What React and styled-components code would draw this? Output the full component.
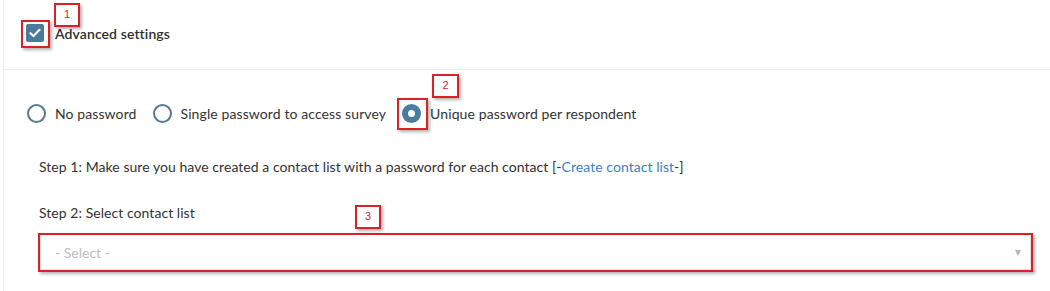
import React from "react";
import styled, { createGlobalStyle } from "styled-components";

const Global = createGlobalStyle`
  html, body { margin: 0; padding: 0; background: #fff; }
  body { font-family: Lato, "Liberation Sans", sans-serif; color: #333; }
  * { box-sizing: border-box; }
`;

const Page = styled.div`
  position: relative;
  width: 1050px;
  height: 291px;
  padding-left: 3px;
  overflow: hidden;
`;

const Panel = styled.div`
  border-left: 1px solid #f1f1f1;
  height: 100%;
`;

const Header = styled.div`
  height: 70px;
  border-bottom: 1px solid #ededed;
  display: flex;
  align-items: center;
  padding-left: 22px;
  gap: 11px;
  padding-bottom: 3px;
`;

const CheckBox = styled.span`
  width: 18px;
  height: 18px;
  border-radius: 2px;
  background: #4a7b9d;
  display: inline-flex;
  align-items: center;
  justify-content: center;
`;

const HeaderLabel = styled.span`
  font-size: 14px;
  font-weight: 600;
  color: #2e2e2e;
  letter-spacing: 0.1px;
`;

const Body = styled.div`
  padding: 34px 19px 0 23px;
`;

const RadioRow = styled.div`
  display: flex;
  align-items: center;
  height: 18px;
`;

const RadioItem = styled.label`
  display: inline-flex;
  align-items: center;
  gap: 9px;
  margin-right: 16px;
  font-size: 14px;
  color: #333;
  letter-spacing: 0.1px;
`;

const RadioCircle = styled.span`
  width: 19px;
  height: 19px;
  border-radius: 50%;
  border: ${(p) => (p.$checked ? "6px solid #4a7ca0" : "2px solid #577a8e")};
  background: #fff;
  flex: none;
`;

const Steps = styled.div`
  padding-left: 12px;
  margin-top: 36px;
`;

const StepText = styled.div`
  font-size: 14px;
  line-height: 18px;
  color: #333;
  letter-spacing: 0.05px;
  margin-bottom: ${(p) => p.$mb || "0"};
`;

const Link = styled.a`
  color: #3b7fd2;
  text-decoration: none;
`;

const Select = styled.div`
  height: 36px;
  width: 991px;
  margin-left: 1px;
  border: 1px solid #e2e2e2;
  display: flex;
  align-items: center;
  justify-content: space-between;
  padding: 0 9px 0 14px;
  font-size: 14px;
  color: #bdbdbd;
`;

const Arrow = styled.span`
  width: 0;
  height: 0;
  border-left: 3.5px solid transparent;
  border-right: 3.5px solid transparent;
  border-top: 6px solid #b5b5b5;
  margin-top: 2px;
`;

const Mark = styled.div`
  position: absolute;
  border: 2px solid #d8222a;
  box-shadow: 2px 2px 3px rgba(0, 0, 0, 0.3);
  pointer-events: none;
`;

const Num = styled(Mark)`
  display: flex;
  justify-content: center;
  align-items: flex-start;
  padding-top: 3px;
  font-family: "Liberation Sans", Arial, sans-serif;
  font-size: 11px;
  color: #d8222a;
  background: transparent;
`;

const marks = [
  { n: "1", label: [54, 3, 26, 24], box: [21, 20, 29, 28] },
  { n: "2", label: [432, 74, 27, 24], box: [397, 98, 31, 32] },
  { n: "3", label: [355, 205, 26, 24], box: [38, 233, 995, 39] },
];

export default function App() {
  return (
    <>
      <Global />
      <Page>
        <Panel>
          <Header>
            <CheckBox>
              <svg width="12" height="10" viewBox="0 0 12 10">
                <path d="M1.5 5.2 L4.5 8 L10.5 1.8" fill="none" stroke="#fff" strokeWidth="2.2" strokeLinecap="round" strokeLinejoin="round" />
              </svg>
            </CheckBox>
            <HeaderLabel>Advanced settings</HeaderLabel>
          </Header>
          <Body>
            <RadioRow>
              <RadioItem>
                <RadioCircle />
                No password
              </RadioItem>
              <RadioItem>
                <RadioCircle />
                Single password to access survey
              </RadioItem>
              <RadioItem>
                <RadioCircle $checked />
                Unique password per respondent
              </RadioItem>
            </RadioRow>
            <Steps>
              <StepText $mb="28px">
                Step 1: Make sure you have created a contact list with a password for each contact [-
                <Link href="#">Create contact list</Link>-]
              </StepText>
              <StepText $mb="12px">Step 2: Select contact list</StepText>
              <Select>
                <span>- Select -</span>
                <Arrow />
              </Select>
            </Steps>
          </Body>
        </Panel>
        {marks.map((m) => (
          <React.Fragment key={m.n}>
            <Num style={{ left: m.label[0], top: m.label[1], width: m.label[2], height: m.label[3] }}>{m.n}</Num>
            <Mark style={{ left: m.box[0], top: m.box[1], width: m.box[2], height: m.box[3] }} />
          </React.Fragment>
        ))}
      </Page>
    </>
  );
}
